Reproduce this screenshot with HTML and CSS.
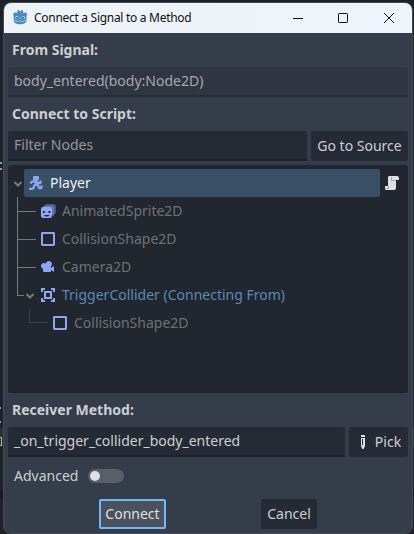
FILE: index.html
```html
<!DOCTYPE html>
<html lang="en">
<head>
<meta charset="utf-8">
<title>Connect a Signal to a Method</title>
<link rel="stylesheet" href="styles.css">
</head>
<body>
<div class="backdrop">
  <i class="seam"></i><i class="mark blue"></i><i class="mark teal"></i><i class="mark yellow"></i><i class="band"></i>
</div>
<main class="dialog">
  <header class="titlebar">
    <svg class="logo" width="16" height="16" viewBox="0 0 16 16">
      <path fill="#478cbf" d="M1 5.200 2.800 3.200l1.500.9 1-.5L5.300 1.500 7 1l.7 1.500h.8L9.200 1l1.800.5.1 2.100 1 .5 1.500-.9L15.300 5.200l-.8 1.400V11.500C14.500 13.900 11.500 15.200 8.200 15.200S1.700 13.900 1.700 11.500V6.600z"/>
      <circle cx="4.900" cy="8.600" r="1.500" fill="#e4eff7"/><circle cx="11.400" cy="8.600" r="1.500" fill="#e4eff7"/>
      <circle cx="5.100" cy="8.700" r="1" fill="#414a55"/><circle cx="11.200" cy="8.700" r="1" fill="#414a55"/>
      <path d="M8.200 8v2M2 11.400l2.500.3.200 1h2l.3-.8h2.300l.3.800h2l.2-1 2.500-.3" fill="none" stroke="#b9d5e9" stroke-width=".7"/>
    </svg>
    <h1>Connect a Signal to a Method</h1>
    <div class="controls">
      <svg width="10" height="10" viewBox="0 0 10 10"><path d="M0 5.500h10" stroke="#111"/></svg>
      <svg class="maximize" width="10" height="10" viewBox="0 0 10 10"><rect x=".5" y=".5" width="9" height="9" rx=".7" fill="none" stroke="#111"/></svg>
      <svg width="10" height="10" viewBox="0 0 10 10"><path d="m0 0 10 10M10 0 0 10" stroke="#111"/></svg>
    </div>
  </header>
  <section class="content">
    <h2>From Signal:</h2>
    <div class="field readonly">body_entered(body:Node2D)</div>
    <h2 class="script-label">Connect to Script:</h2>
    <div class="line">
      <div class="field placeholder">Filter Nodes</div>
      <button class="source">Go to Source</button>
    </div>
    <div class="tree">
      <div class="row root">
        <svg class="arrow" width="10" height="8" viewBox="0 0 10 8"><path d="m1.500 2 3.500 3.500L8.500 2"/></svg>
        <div class="selected">
          <svg class="icon" width="16" height="16" viewBox="0 0 16 16"><rect x="5" y="1" width="6" height="4.500" rx="1" fill="#8da5f3"/><path fill="none" stroke="#8da5f3" stroke-width="2.300" stroke-linejoin="round" d="M8.300 5 7.500 10M8 6.500H4.200L2.300 8.300M8 6.500l2 1.500h2.500V5.500M7.300 9.300l2.700.8 1 2.900h2.200l.6-2.500M7 9.500l-1.200 2.700-1.300 1.600H1.200"/></svg>
          <span>Player</span>
        </div>
        <svg class="script" width="16" height="16" viewBox="0 0 16 16"><path fill="#e0e0e0" d="M5 1h8a2 2 0 0 1 2 2v2h-3v8a2 2 0 0 1-2 2H2.500A1.500 1.500 0 0 1 1 13.500V11h3V2.500A1.500 1.500 0 0 1 5 1z"/><path fill="none" stroke="#a3a5a9" d="M7.500 2v3.500H12M4.500 11v2.500H2"/></svg>
      </div>
      <div class="branch">
        <div class="row child"><i class="twig"></i>
          <svg class="icon" width="16" height="16" viewBox="0 0 16 16"><path fill="#495582" d="M7 1h7a2 2 0 0 1 2 2v6.500a2 2 0 0 1-2 2L5 3a2 2 0 0 1 2-2z"/><path fill="#6476b0" d="M5 2.500h7a2 2 0 0 1 2 2V11a2 2 0 0 1-2 2L3 4.500a2 2 0 0 1 2-2z"/><rect x="1" y="4" width="11" height="11" rx="2" fill="#8da5f3"/><path fill="#22262e" d="M3 8h1.800v2H3zM8.500 8h1.800v2H8.500zM4 12h5.500q-.5 1.500-2.800 1.500T4 12z"/></svg>
          <span>AnimatedSprite2D</span></div>
        <div class="row child"><i class="twig"></i>
          <svg class="icon" width="16" height="16" viewBox="0 0 16 16"><rect x="2" y="2" width="12" height="12" rx=".4" fill="none" stroke="#8da5f3" stroke-width="2"/></svg>
          <span>CollisionShape2D</span></div>
        <div class="row child"><i class="twig"></i>
          <svg class="icon" width="16" height="16" viewBox="0 0 16 16"><path fill="#8da5f3" d="M9 2a3 3 0 0 0-3 2.777 3 3 0 1 0-3 5.047V12a1 1 0 0 0 1 1h6a1 1 0 0 0 1-1v-1l3 2V7l-3 2V7.230A3 3 0 0 0 9 2z"/></svg>
          <span>Camera2D</span></div>
        <div class="row child origin"><i class="twig short"></i>
          <svg class="arrow" width="10" height="8" viewBox="0 0 10 8"><path d="m1.500 2 3.500 3.500L8.500 2"/></svg>
          <svg class="icon" width="16" height="16" viewBox="0 0 16 16"><path fill="#8da5f3" fill-rule="evenodd" d="M1 1v4h2V3h2V1zm10 0v2h2v2h2V1zM4 4v8h8V4zm2 2h4v4H6zm-5 5v4h4v-2H3v-2zm12 0v2h-2v2h4v-4z"/></svg>
          <span>TriggerCollider (Connecting From)</span></div>
      </div>
      <div class="row leaf"><i class="elbow"></i>
        <svg class="icon" width="16" height="16" viewBox="0 0 16 16"><rect x="2" y="2" width="12" height="12" rx=".4" fill="none" stroke="#8da5f3" stroke-width="2"/></svg>
        <span>CollisionShape2D</span></div>
    </div>
    <h2 class="method-label">Receiver Method:</h2>
    <div class="line">
      <div class="field">_on_trigger_collider_body_entered</div>
      <button class="pick"><svg width="16" height="16" viewBox="0 0 16 16"><path fill="#e0e0e0" d="M6.500 1h3a.5.500 0 0 1 .5.500V3H6V1.500a.5.500 0 0 1 .5-.5zM6 4h4v8l-1.300 3H7.300L6 12zm1 1v6h1V5z" fill-rule="evenodd"/></svg>Pick</button>
    </div>
    <div class="advanced"><span>Advanced</span><div class="toggle"><i></i></div></div>
    <footer><button class="connect">Connect</button><button class="cancel">Cancel</button></footer>
  </section>
</main>
</body>
</html>
```
FILE: styles.css
```css
* { box-sizing: border-box; }
body {
  margin: 0;
  width: 414px;
  height: 534px;
  overflow: hidden;
  position: relative;
  padding: 2px 1px 0 3px;
  background: #1d2229;
  color: #cdcfd2;
  font: 14px/20px "Noto Sans", sans-serif;
}
h1, h2 { margin: 0; }
.backdrop { position: absolute; inset: 0; }
.backdrop i { position: absolute; left: 0; }
.backdrop .seam { top: 428px; width: 414px; height: 19px; background: #2b2f36; }
.backdrop .band { top: 491px; width: 414px; height: 8px; background: #171a20; }
.mark { width: 2px; height: 2px; }
.backdrop .teal { top: 162px; height: 8px; border: solid #79a9b5; border-width: 2px 0; }
.backdrop .blue { top: 407px; width: 1px; height: 16px; border: solid #7aa5dc; border-width: 2px 0; }
.backdrop .yellow { top: 437px; height: 9px; border: 1px solid #bdb479; border-left: 0; }

.dialog {
  position: relative;
  width: 410px;
  height: 532px;
  border: 1px solid #454b52;
  border-radius: 8px;
  overflow: hidden;
  background: #363d4a;
}
.titlebar {
  height: 30px;
  padding: 0 18px 0 8px;
  display: flex;
  align-items: center;
  background: linear-gradient(90deg, #edf3f7, #eff3fb);
  color: #111;
}
.logo { margin-top: -2px; }
.titlebar h1 {
  margin-left: 6px;
  font-size: 12px;
  font-weight: 400;
  letter-spacing: -.29px;
  white-space: nowrap;
}
.controls { margin-left: auto; display: flex; gap: 35px; margin-top: -1px; }
.maximize { margin-right: 1px; }

.content { padding: 7px 4px 0; }
h2 { font-size: 14px; line-height: 20px; font-weight: 700; padding-left: 4px; }
.field {
  flex: 1;
  height: 30px;
  padding: 4px 6px 0;
  border-radius: 2px 2px 0 0;
  border-bottom: 2px solid #1e222a;
  background: #252b34;
  white-space: nowrap;
}
.readonly { margin-top: 7px; background: #303641; border-color: #262c35; color: #a5a8ad; }
.placeholder { color: #94979c; }
.script-label { margin: 7px 0; }
.line { display: flex; gap: 4px; }
button {
  height: 30px;
  padding: 0;
  border: 0;
  border-radius: 2px;
  background: #252b34;
  color: #cdcfd2;
  font: inherit;
  display: flex;
  align-items: center;
  justify-content: center;
  white-space: nowrap;
}
.source { width: 97px; }

.tree {
  height: 228px;
  margin-top: 4px;
  padding: 4px 4px 0;
  border-radius: 2px;
  background: #22262e;
  color: #6e7178;
}
.row { height: 28px; display: flex; align-items: center; white-space: nowrap; }
.icon { margin-right: 6px; flex: none; }
.arrow { flex: none; fill: none; stroke: #777a7f; stroke-width: 2; }
.root .arrow { margin: 2px 1px 0; }
.selected {
  width: 356px;
  height: 28px;
  padding-left: 4px;
  display: flex;
  align-items: center;
  border-radius: 2px;
  background: #394f65;
  color: #f0f1f2;
}
.script { margin-left: 4px; }
.branch {
  height: 112px;
  margin-left: 5px;
  position: relative;
}
.branch::before {
  content: "";
  position: absolute;
  left: 0;
  top: 0;
  width: 1px;
  height: 98px;
  background: #777a7f;
}
.twig { width: 19px; height: 1px; margin-right: 4px; background: #777a7f; }
.twig.short { width: 7px; margin-right: 1px; }
.origin .arrow { margin: 2px 5px 0 0; }
.origin { color: #578bb8; }
.elbow {
  width: 19px;
  height: 14px;
  margin: -14px 4px 0 17px;
  border: solid #3e4249;
  border-width: 0 0 1px 1px;
}
.method-label { margin: 7px 0; }
.pick { width: 59px; gap: 4px; padding-right: 1px; }
.advanced { height: 22px; margin-top: 8px; padding-left: 6px; display: flex; align-items: center; }
.toggle {
  width: 36px;
  height: 14px;
  margin-left: 10px;
  padding: 2px;
  border-radius: 7px;
  background: #595f68;
}
.toggle i { display: block; width: 10px; height: 10px; border-radius: 5px; background: #e0e0e0; }
footer { margin-top: 12px; display: flex; padding-left: 91px; gap: 95px; }
.connect { width: 67px; border: 2px solid #70bafa; background: #4b515d; color: #dfe0e2; }
.cancel { width: 56px; }
```
